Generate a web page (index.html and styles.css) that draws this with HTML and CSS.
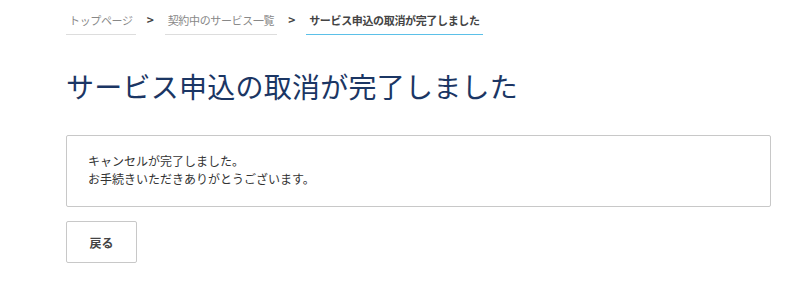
FILE: index.html
```html
<!DOCTYPE html>
<html lang="ja">
<head>
<meta charset="utf-8">
<link rel="stylesheet" href="styles.css">
</head>
<body>
<div class="page">
  <nav class="crumbs">
    <span class="crumb">トップページ</span>
    <span class="sep">&gt;</span>
    <span class="crumb">契約中のサービス一覧</span>
    <span class="sep">&gt;</span>
    <span class="crumb active">サービス申込の取消が完了しました</span>
  </nav>
  <h1 class="title">サービス申込の取消が完了しました</h1>
  <div class="panel">
    <p>キャンセルが完了しました。<br>お手続きいただきありがとうございます。</p>
  </div>
  <button class="back">戻る</button>
</div>
</body>
</html>
```
FILE: styles.css
```css
* { box-sizing: border-box; }
html, body { margin: 0; padding: 0; background: #fff; }
body {
  font-family: "Noto Sans CJK JP", "Noto Sans", sans-serif;
  color: #333;
}
.page {
  padding: 10px 29px 0 66px;
}
.crumbs {
  display: flex;
  align-items: flex-start;
  font-size: 11px;
  line-height: 16px;
}
.crumb {
  color: #888;
  padding: 2px 3px 6px;
  border-bottom: 1px solid #ddd;
  letter-spacing: -0.35px;
}
.crumb.active {
  color: #444;
  font-weight: bold;
  border-bottom: 1px solid #5bc0e8;
}
.sep {
  color: #444;
  font-weight: bold;
  font-size: 12px;
  padding: 2px 0 0;
  width: 29px;
  text-align: center;
}
.title {
  margin: 31px 0 0;
  font-size: 28px;
  line-height: 40px;
  font-weight: normal;
  letter-spacing: 0.25px;
  color: #1b3664;
}
.panel {
  margin-top: 29px;
  border: 1px solid #c8c8c8;
  border-radius: 2px;
  height: 72px;
  padding: 16px 21px;
}
.panel p {
  margin: 0;
  font-size: 12px;
  line-height: 18px;
  color: #333;
}
.back {
  margin-top: 14px;
  width: 71px;
  height: 42px;
  border: 1px solid #c8c8c8;
  border-radius: 2px;
  background: #fff;
  font-family: inherit;
  font-size: 12px;
  font-weight: bold;
  color: #444;
}
```
